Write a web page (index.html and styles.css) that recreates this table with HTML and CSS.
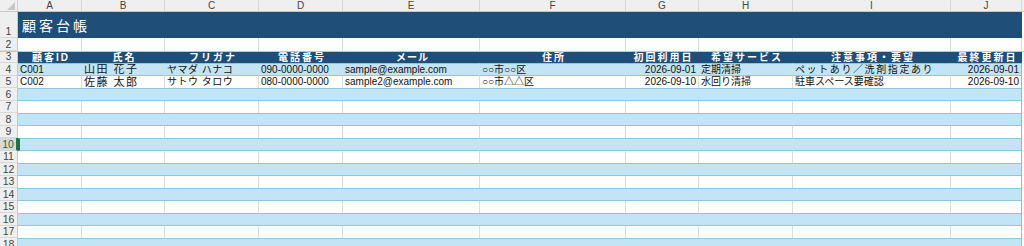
FILE: index.html
```html
<!DOCTYPE html>
<html lang="ja">
<head>
<meta charset="utf-8">
<title>顧客台帳</title>
<link rel="stylesheet" href="styles.css">
</head>
<body>
<div class="sheet">
  <div class="row colhead">
    <div class="corner"><span class="tri"></span></div>
    <div class="ch">A</div><div class="ch">B</div><div class="ch">C</div><div class="ch">D</div><div class="ch">E</div><div class="ch">F</div><div class="ch">G</div><div class="ch">H</div><div class="ch">I</div><div class="ch">J</div><div class="ch rest"></div>
  </div>
  <div class="row r-title">
    <div class="rh">1</div>
    <div class="title">顧客台帳</div>
    <div class="c rest"></div>
  </div>
  <div class="row r-blank">
    <div class="rh">2</div>
    <div class="c"></div><div class="c"></div><div class="c"></div><div class="c"></div><div class="c"></div><div class="c"></div><div class="c"></div><div class="c"></div><div class="c"></div><div class="c"></div><div class="c rest"></div>
  </div>
  <div class="row r-head">
    <div class="rh">3</div>
    <div class="h">顧客ID</div><div class="h">氏名</div><div class="h">フリガナ</div><div class="h">電話番号</div><div class="h narrow">メール</div><div class="h">住所</div><div class="h">初回利用日</div><div class="h">希望サービス</div><div class="h">注意事項・要望</div><div class="h">最終更新日</div><div class="c rest"></div>
  </div>
  <div class="row band t13">
    <div class="rh">4</div>
    <div class="c">C001</div><div class="c name">山田 花子</div><div class="c kana">ヤマダ ハナコ</div><div class="c">090-0000-0000</div><div class="c">sample@example.com</div><div class="c">○○市○○区</div><div class="c num">2026-09-01</div><div class="c jpc">定期清掃</div><div class="c note">ペットあり／洗剤指定あり</div><div class="c num">2026-09-01</div><div class="c rest"></div>
  </div>
  <div class="row plain t12">
    <div class="rh">5</div>
    <div class="c">C002</div><div class="c name">佐藤 太郎</div><div class="c kana">サトウ タロウ</div><div class="c">080-0000-0000</div><div class="c">sample2@example.com</div><div class="c">○○市△△区</div><div class="c num">2026-09-10</div><div class="c jpc">水回り清掃</div><div class="c jpc">駐車スペース要確認</div><div class="c num">2026-09-10</div><div class="c rest"></div>
  </div>
  <div class="row band t13"><div class="rh">6</div><div class="fill"></div><div class="c rest"></div></div>
  <div class="row plain t12"><div class="rh">7</div><div class="c"></div><div class="c"></div><div class="c"></div><div class="c"></div><div class="c"></div><div class="c"></div><div class="c"></div><div class="c"></div><div class="c"></div><div class="c"></div><div class="c rest"></div></div>
  <div class="row band t13"><div class="rh">8</div><div class="fill"></div><div class="c rest"></div></div>
  <div class="row plain t12"><div class="rh">9</div><div class="c"></div><div class="c"></div><div class="c"></div><div class="c"></div><div class="c"></div><div class="c"></div><div class="c"></div><div class="c"></div><div class="c"></div><div class="c"></div><div class="c rest"></div></div>
  <div class="row band t13"><div class="rh active">10</div><div class="fill sel"></div><div class="c rest"></div></div>
  <div class="row plain t12"><div class="rh">11</div><div class="c"></div><div class="c"></div><div class="c"></div><div class="c"></div><div class="c"></div><div class="c"></div><div class="c"></div><div class="c"></div><div class="c"></div><div class="c"></div><div class="c rest"></div></div>
  <div class="row band t13"><div class="rh">12</div><div class="fill"></div><div class="c rest"></div></div>
  <div class="row plain t12"><div class="rh">13</div><div class="c"></div><div class="c"></div><div class="c"></div><div class="c"></div><div class="c"></div><div class="c"></div><div class="c"></div><div class="c"></div><div class="c"></div><div class="c"></div><div class="c rest"></div></div>
  <div class="row band t13"><div class="rh">14</div><div class="fill"></div><div class="c rest"></div></div>
  <div class="row plain t12"><div class="rh">15</div><div class="c"></div><div class="c"></div><div class="c"></div><div class="c"></div><div class="c"></div><div class="c"></div><div class="c"></div><div class="c"></div><div class="c"></div><div class="c"></div><div class="c rest"></div></div>
  <div class="row band t13"><div class="rh">16</div><div class="fill"></div><div class="c rest"></div></div>
  <div class="row plain t12"><div class="rh">17</div><div class="c"></div><div class="c"></div><div class="c"></div><div class="c"></div><div class="c"></div><div class="c"></div><div class="c"></div><div class="c"></div><div class="c"></div><div class="c"></div><div class="c rest"></div></div>
  <div class="row band t13"><div class="rh">18</div><div class="fill"></div><div class="c rest"></div></div>
</div>
</body>
</html>
```
FILE: styles.css
```css
html, body {
  margin: 0;
  padding: 0;
  background: #ffffff;
  overflow: hidden;
}
.sheet {
  width: 1024px;
  font-family: "Liberation Sans", "Noto Sans CJK JP", sans-serif;
  font-size: 10px;
  color: #111;
}
.row {
  display: grid;
  grid-template-columns: 18px 64px 83px 94px 84px 137px 146px 73px 94px 158px 71px 1fr;
  box-sizing: border-box;
}
.row > div {
  box-sizing: border-box;
  overflow: hidden;
  white-space: nowrap;
}
/* column header */
.colhead {
  height: 12px;
  background: #efefef;
  border-bottom: 1px solid #c8c8c8;
}
.corner {
  border-right: 1px solid #d2d2d2;
  position: relative;
}
.tri {
  position: absolute;
  right: 2px;
  bottom: 1px;
  width: 0;
  height: 0;
  border-left: 8px solid transparent;
  border-bottom: 8px solid #c8c8c8;
}
.ch {
  text-align: center;
  font-size: 10px;
  line-height: 11px;
  color: #444;
  border-right: 1px solid #d6d6d6;
}
.ch.rest { border-right: none; }
/* row header */
.rh {
  background: #efefef;
  border-right: 1px solid #c8c8c8;
  border-bottom: 1px solid #d8d8d8;
  color: #444;
  font-size: 10.5px;
  display: flex;
  align-items: flex-end;
  justify-content: center;
  line-height: 11px;
}
.rh.active {
  background: #d9d9d9;
  color: #1e6b3c;
  border-right: 2px solid #1e7145;
}
/* title */
.r-title { height: 26px; }
.title {
  grid-column: 2 / 12;
  background: #1f4e79;
  color: #fff;
  font-family: "Noto Sans CJK JP", sans-serif;
  font-size: 14px;
  font-weight: 400;
  letter-spacing: 3px;
  display: flex;
  align-items: center;
  padding-left: 4px;
  padding-bottom: 1px;
}
/* blank row 2 */
.r-blank { height: 13px; }
.c {
  border-right: 1px solid #dcdcdc;
  padding: 0 2px;
  line-height: 12px;
}
.c.rest { border-right: none; background: #fff; }
/* header row 3 */
.r-head {
  height: 12px;
  border-top: 1px solid #9fd2ea;
}
.r-head .rh {
  line-height: 10px;
  font-size: 10px;
}
.h {
  background: #1f4e79;
  color: #fff;
  font-weight: bold;
  text-align: center;
  font-size: 10px;
  letter-spacing: 2px;
  line-height: 11px;
  padding-left: 2px;
}
.h.narrow { letter-spacing: 1px; }
/* data rows */
.t13 { height: 13px; }
.t12 { height: 12px; }
.band > .c:not(.rest), .band > .fill {
  background: #c2e4f5;
  border-top: 1px solid #8cc8e4;
  border-bottom: 1px solid #8cc8e4;
  border-right: 1px solid #c2e4f5;
  line-height: 11px;
}
.band > .c:nth-child(11), .band > .fill {
  border-right: 1px solid #7dbfe0;
}
.plain > .c:nth-child(11) {
  border-right: 1px solid #7dbfe0;
}
.fill {
  grid-column: 2 / 12;
}
.fill.sel {
  border-left: 2px solid #1e7145;
}
.num { text-align: right; }
.name { font-size: 11px; letter-spacing: 1.5px; }
.kana { font-size: 10px; letter-spacing: 0.5px; }
.jpc { font-size: 10px; }
.note { font-size: 10px; letter-spacing: 1.6px; }
.plain > .c { line-height: 12px; }
```
